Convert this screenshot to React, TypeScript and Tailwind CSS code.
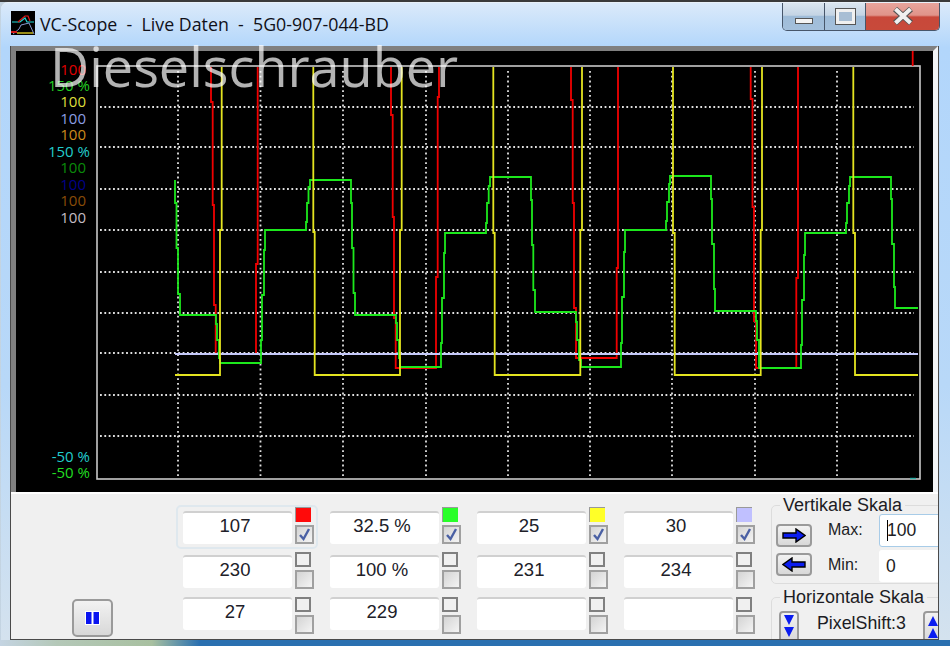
import React from "react";

const GREEN =
  "175,180 175,203 176.5,203 176.5,248 178,248 178,294 180,294 180,315 216,315 216,324 217,324 217,340 219,340 219,358 220,358 220,363 261,363 261,340 262,340 262,295 264,295 264,250 265,250 265,230 306,230 306,222 307,222 307,203 308.5,203 308.5,187 310,187 310,180 351,180 351,203 352,203 352,248 353.5,248 353.5,293 355,293 355,315 396,315 396,323 397,323 397,340 399,340 399,358 400,358 400,367 441,367 441,343 442,343 442,298 444,298 444,253 445,253 445,233 486,233 486,223 487,223 487,203 488.7,203 488.7,186 490,186 490,177 531,177 531,200 532,200 532,245 533.3,245 533.3,290 535,290 535,312 576,312 576,322 577,322 577,340 579,340 579,360 581,360 581,367 621,367 621,343 622,343 622,297 624,297 624,252 625,252 625,230 666,230 666,221 667,221 667,202 669,202 669,184 670,184 670,176 711,176 711,199 712,199 712,244 714,244 714,289 715,289 715,311 756,311 756,321 757,321 757,340 759,340 759,368 801,368 801,345 802,345 802,300 804,300 804,255 805,255 805,233 846,233 846,223 847,223 847,203 849,203 849,186 850,186 850,177 891,177 891,199 892,199 892,244 894,244 894,287 895,287 895,308 918,308";
const YELLOW =
  "175,375 220,375 220,230 221.7,230 221.7,67 M313.3,67 313.3,232 314.7,232 314.7,375 400,375 400,230 401.7,230 401.7,67 M493.3,67 493.3,233 494.7,233 494.7,375 580.3,375 580.3,230 582,230 582,67 M673,67 673,233 674.7,233 674.7,375 760.7,375 760.7,230 762,230 762,67 M853.3,67 853.3,233 855,233 855,375 918,375";
const REDS = [
  "211,67 211,102 212.7,102 212.7,205 214,205 214,305 215.7,305 215.7,354 256,354 256,264 257.7,264 257.7,67",
  "391,67 391,115 392.7,115 392.7,217 394,217 394,318 395.7,318 395.7,368 436,368 436,277 437.7,277 437.7,97 439,97 439,67",
  "571,67 571,100 572.7,100 572.7,203 574,203 574,308 576,308 576,358 616.7,358 616.7,268 618,268 618,67",
  "750.7,67 750.7,99 752.5,99 752.5,207 754,207 754,321 756,321 756,368 796.3,368 796.3,278 798,278 798,67",
  "912.7,50 912.7,66",
];
const VX = [178, 260.5, 343, 426, 508, 590, 672, 755, 837];
const HY = [107, 147, 189, 230, 272, 313, 353, 395, 436];

const LABELS = [
  { t: "100", c: "text-[#e00000]", p: "pr-[4px]" },
  { t: "150 %", c: "text-[#22cc22]", p: "pr-0" },
  { t: "100", c: "text-[#dede3c]", p: "pr-[4px]" },
  { t: "100", c: "text-[#8c9ee4]", p: "pr-[4px]" },
  { t: "100", c: "text-[#cc8a1c]", p: "pr-[4px]" },
  { t: "150 %", c: "text-[#22cccc]", p: "pr-0" },
  { t: "100", c: "text-[#0a8a0a]", p: "pr-[4px]" },
  { t: "100", c: "text-[#000088]", p: "pr-[4px]" },
  { t: "100", c: "text-[#8a4c08]", p: "pr-[4px]" },
  { t: "100", c: "text-[#c4bcc4]", p: "pr-[4px]" },
];

const Check = ({ on }: { on: boolean }) => (
  <div className="w-[19px] h-[19px] border-2 border-[#a0a0a0] bg-gradient-to-br from-[#d4d4d4] to-[#f4f4f4] flex items-center justify-center">
    {on && (
      <svg width="15" height="15" viewBox="0 0 15 15">
        <path d="M3 8 L6.5 12 L12 2" fill="none" stroke="#4a60a4" strokeWidth="2.4" />
      </svg>
    )}
  </div>
);

const Cell = ({
  v,
  sw,
  on,
  mt,
}: {
  v: string;
  sw: string;
  on?: boolean;
  mt: string;
}) => (
  <div className="flex gap-[3px]">
    <div
      className={`w-[109px] h-[33px] bg-white rounded-[3px] border-t-2 border-[#d0d0d0] flex items-center justify-center pr-[5px] pb-[5px] text-[18.5px] text-[#202028] ${mt}`}
    >
      {v}
    </div>
    <div className="flex flex-col gap-[3px]">
      <div className={`w-[16px] h-[15px] ${sw}`} />
      <Check on={!!on} />
    </div>
  </div>
);

const EMPTY = "border-2 border-[#808080] bg-[#f0f0f0]";

const Arrow = ({ left }: { left?: boolean }) => (
  <button className="w-[36px] h-[23px] rounded-[4px] border-2 border-[#9a9a9a] bg-gradient-to-b from-[#f2f2f2] to-[#d8d8d8] flex items-center justify-center">
    <svg width="24" height="15" viewBox="0 0 24 15" className={left ? "-scale-x-100" : ""}>
      <path d="M1 5 H14 V1 L23 7.5 L14 14 V10 H1 Z" fill="#0a1cf0" stroke="#000" strokeWidth="1.4" />
    </svg>
  </button>
);

const Spin = ({ up }: { up?: boolean }) => (
  <button className="shrink-0 w-[20px] h-[32px] rounded-[4px] border-2 border-[#9a9a9a] bg-gradient-to-b from-[#f2f2f2] to-[#d8d8d8] flex items-start justify-center pt-[1px]">
    <svg width="12" height="25" viewBox="0 0 12 25" className={up ? "-scale-y-100" : ""}>
      <path d="M1 1 H11 L6 11 Z M1 13 H11 L6 23 Z" fill="#0a1cf0" />
    </svg>
  </button>
);

export default function App() {
  return (
    <div className="flex flex-col w-[950px] h-[646px] overflow-hidden bg-[linear-gradient(90deg,#c4d4e2_0%,#b4c8b8_6%,#a8c0a0_16%,#2a70b0_21%)] font-['Liberation_Sans',sans-serif]">
      <div className="h-[2px] shrink-0 bg-[#3a3a3a]" />
      <div className="h-[638px] shrink-0 ml-[1px] rounded-tl-[7px] border-t border-[#e8f0f8] bg-[linear-gradient(180deg,#dbeafa_0%,#b2d6fb_7%,#b8d8f8_60%,#d4e2ee_100%)] flex flex-col">
        {/* title bar */}
        <div className="h-[43px] shrink-0 flex items-start pl-[10px] pr-[10px]">
          <svg width="24" height="24" viewBox="0 0 24 24" className="mt-[8px]">
            <rect width="24" height="24" fill="#000" />
            <path d="M1 11 L9 11 L14 7 L16 11 L23 11" fill="none" stroke="#20d8d8" strokeWidth="1.2" />
            <path d="M7 11 L14 5 L17 5 L19 10" fill="none" stroke="#e01818" strokeWidth="1.2" />
            <path d="M2 23 L8 18 L10 14 L18 12 L23 23" fill="none" stroke="#8898d0" strokeWidth="1" />
            <path d="M6 22 L22 22" stroke="#d8c820" strokeWidth="1.4" />
            <path d="M0 21 H6" stroke="#d01818" strokeWidth="2" />
          </svg>
          <span className="ml-[5px] mt-[9px] text-[17.8px] leading-[24px] text-[#101018] whitespace-pre font-['Open_Sans',sans-serif]">
            {"VC-Scope  -  Live Daten  -  5G0-907-044-BD"}
          </span>
          <div className="ml-auto h-[28px] flex border border-t-0 border-[#47566a] rounded-b-[5px] overflow-hidden">
            <div className="w-[42px] bg-[linear-gradient(180deg,#dbe6f0_0%,#c4d4e4_45%,#9fbcd8_50%,#a4c0dc_100%)] border-r border-[#47566a] flex items-center justify-center">
              <div className="w-[18px] h-[6px] mt-[9px] bg-[#f4f4f4] border border-[#555]" />
            </div>
            <div className="w-[41px] bg-[linear-gradient(180deg,#dbe6f0_0%,#c4d4e4_45%,#9fbcd8_50%,#a4c0dc_100%)] border-r border-[#47566a] flex items-center justify-center">
              <div className="w-[19px] h-[15px] mb-[1px] border-[3px] border-[#f0f0f0] outline outline-1 outline-[#555] bg-[#a8bed4]" />
            </div>
            <div className="w-[73px] bg-[linear-gradient(180deg,#e8a49c_0%,#e0948a_45%,#c8483a_52%,#c84a3a_100%)] flex items-center justify-center">
              <svg width="20" height="18" viewBox="0 0 20 18" className="mb-[1px]">
                <path d="M2 2 L18 16 M18 2 L2 16" stroke="#555" strokeWidth="6" />
                <path d="M2.5 2 L17.5 16 M17.5 2 L2.5 16" stroke="#f0f0f0" strokeWidth="4" />
              </svg>
            </div>
          </div>
        </div>

        {/* client */}
        <div className="ml-[9px] w-[929px] flex-1 min-h-0 flex flex-col border border-t-0 border-[#4a4a4a]">
          {/* plot */}
          <div className="relative h-[446px] shrink-0 border-t-[5px] border-l-[5px] border-r-[5px] border-t-[#808080] border-l-[#808080] border-r-[#f2f4f6] bg-black">
            <svg width="917" height="441" viewBox="16 51 917 441" className="block">
              <rect x="97" y="66" width="823" height="413" fill="none" stroke="#c8c8c8" strokeWidth="1.6" />
              {HY.map((y) => (
                <line key={y} x1="100" x2="914" y1={y} y2={y} stroke="#e0e0e0" strokeWidth="1.8" strokeDasharray="1.8 2.55" />
              ))}
              {VX.map((x) => (
                <line key={x} x1={x} x2={x} y1="71" y2="476" stroke="#e0e0e0" strokeWidth="1.8" strokeDasharray="1.8 3" />
              ))}
              {REDS.map((p) => (
                <polyline key={p} points={p} fill="none" stroke="#f00000" strokeWidth="1.8" />
              ))}
              <line x1="175" x2="918" y1="354" y2="354" stroke="#c4c8fa" strokeWidth="1.8" />
              <polyline points={GREEN} fill="none" stroke="#1ce81c" strokeWidth="1.8" />
              {YELLOW.split(" M").map((p) => (
                <polyline key={p} points={p.replace("M", "")} fill="none" stroke="#e4e420" strokeWidth="1.8" />
              ))}
              <line x1="910" x2="916" y1="478.5" y2="478.5" stroke="#30b0a8" strokeWidth="1.4" />
            </svg>
            <div className="absolute left-0 top-[9.5px] w-[74px] flex flex-col items-end text-[15px] font-medium leading-[16.45px] font-['Open_Sans',sans-serif]">
              {LABELS.map((l, i) => (
                <span key={i} className={`${l.c} ${l.p}`}>
                  {l.t}
                </span>
              ))}
            </div>
            <div className="absolute left-0 top-[397px] w-[74px] flex flex-col items-end text-[15px] font-medium leading-[16.45px] font-['Open_Sans',sans-serif]">
              <span className="text-[#22cccc]">-50 %</span>
              <span className="text-[#22dd22]">-50 %</span>
            </div>
            <div className="absolute left-[34px] -top-[12px] text-[54px] leading-[54px] text-white/70 whitespace-nowrap font-['Open_Sans',sans-serif]">
              Dieselschrauber
            </div>
          </div>

          {/* controls */}
          <div className="flex-1 min-h-0 bg-[#f0f0f0] border-t-2 border-white flex">
            <div className="w-[172px] shrink-0 pl-[61px] pt-[105px]">
              <button className="w-[41px] h-[38px] rounded-[5px] border-2 border-[#9a9a9a] bg-gradient-to-b from-[#f2f2f2] to-[#d8d8d8] flex items-center justify-center">
                <svg width="15" height="14" viewBox="0 0 15 14">
                  <rect width="15" height="14" fill="#fff" />
                  <rect x="1" y="1" width="5.5" height="12" fill="#0a14f0" />
                  <rect x="8.5" y="1" width="5.5" height="12" fill="#0a14f0" />
                </svg>
              </button>
            </div>
            <div className="relative w-[588px] shrink-0 pt-[13px] grid grid-cols-[147px_147px_147px_147px] auto-rows-[45px] text-center">
              <div className="absolute left-[-7px] top-[11px] w-[142px] h-[44px] rounded-[5px] border-2 border-[#dfe8ee]" />
              <Cell v="107" sw="bg-[#ff0a0a] border-t border-l border-[#999]" on mt="mt-[4px]" />
              <Cell v="32.5 %" sw="bg-[#28ff28] border-t border-l border-[#999]" on mt="mt-[4px]" />
              <Cell v="25" sw="bg-[#ffff28] border-t border-l border-[#999]" on mt="mt-[4px]" />
              <Cell v="30" sw="bg-[#c0c0ff] border-t border-l border-[#999]" on mt="mt-[4px]" />
              <Cell v="230" sw={EMPTY} mt="mt-[3px]" />
              <Cell v="100 %" sw={EMPTY} mt="mt-[3px]" />
              <Cell v="231" sw={EMPTY} mt="mt-[3px]" />
              <Cell v="234" sw={EMPTY} mt="mt-[3px]" />
              <Cell v="27" sw={EMPTY} mt="mt-0" />
              <Cell v="229" sw={EMPTY} mt="mt-0" />
              <Cell v="" sw={EMPTY} mt="mt-0" />
              <Cell v="" sw={EMPTY} mt="mt-0" />
            </div>
            <div className="flex-1 min-w-0 overflow-hidden pt-[2px] text-[16px] text-[#1c1c24]">
              <fieldset className="w-[190px] h-[88px] border border-[#dcdcdc] rounded-[5px] pl-[4px]">
                <legend className="ml-[4px] px-[3px] text-[18px] leading-[18px]">Vertikale Skala</legend>
                <div className="flex items-start h-[35px]">
                  <div className="mt-[10px]"><Arrow /></div>
                  <span className="ml-[16px] mt-[4px] w-[51px]">Max:</span>
                  <div className="w-[80px] h-[33px] bg-white border border-[#a8cce8] rounded-[3px] flex items-center pl-[7px] text-[17.5px]">
                    <span className="w-px h-[21px] bg-black -mr-px" />
                    <span>100</span>
                  </div>
                </div>
                <div className="flex items-start h-[33px]">
                  <div className="mt-[4px]"><Arrow left /></div>
                  <span className="ml-[16px] mt-[4px] w-[51px]">Min:</span>
                  <div className="w-[80px] h-[32px] bg-white rounded-[3px] flex items-center pl-[7px] mt-[1px] text-[17.5px]">
                    0
                  </div>
                </div>
              </fieldset>
              <fieldset className="w-[190px] h-[60px] mt-[4px] border border-[#dcdcdc] rounded-[5px] pl-[7px]">
                <legend className="ml-[1px] px-[3px] text-[18px] leading-[18px]">Horizontale Skala</legend>
                <div className="flex items-start mt-[5px]">
                  <Spin />
                  <span className="ml-[18px] -mt-[1px] w-[106px] whitespace-nowrap text-[17.8px]">PixelShift:3</span>
                  <Spin up />
                </div>
              </fieldset>
            </div>
          </div>
        </div>
      </div>
      <div className="flex-1" />
    </div>
  );
}
